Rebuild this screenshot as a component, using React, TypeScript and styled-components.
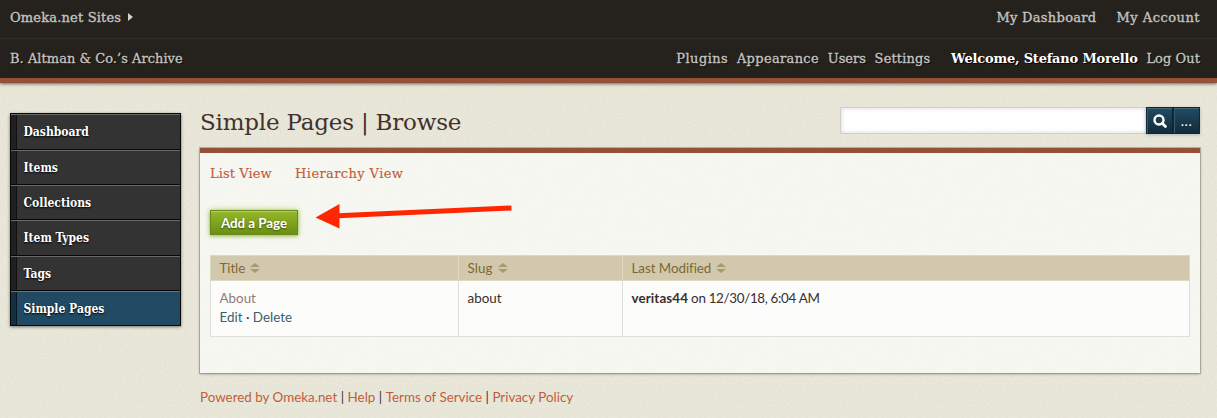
import React from 'react';
import styled, { createGlobalStyle } from 'styled-components';

const slab = '"DejaVu Serif", serif';
const slabNarrow = '"DejaVu Serif Condensed", "DejaVu Serif", serif';
const sans = 'Lato, "Open Sans", sans-serif';

const noise = (frequency: number, alpha: number, rgb: string) =>
  `url("data:image/svg+xml,${encodeURIComponent(
    `<svg xmlns='http://www.w3.org/2000/svg' width='200' height='200'><filter id='n' x='0' y='0' width='100%' height='100%'><feTurbulence type='fractalNoise' baseFrequency='${frequency}' numOctaves='2' stitchTiles='stitch'/><feColorMatrix values='0 0 0 0 ${rgb.split(' ')[0]} 0 0 0 0 ${rgb.split(' ')[1]} 0 0 0 0 ${rgb.split(' ')[2]} ${alpha} 0 0 0 ${-alpha * 0.4}'/></filter><rect width='200' height='200' filter='url(#n)'/></svg>`
  )}")`;

const GlobalStyle = createGlobalStyle`
  * { box-sizing: border-box; }
  body {
    margin: 0;
    overflow: hidden;
    background: #e9e7d9 ${noise(0.45, 1, '0.72 0.71 0.6')};
    font: 13.4px/19px ${sans};
    color: #3a2f30;
  }
  a { color: inherit; text-decoration: none; }
`;

const Page = styled.div`
  height: 418px;
  display: flex;
  flex-direction: column;
`;

const Header = styled.header`
  flex: none;
  background: #25221d;
  border-bottom: 5px solid #955138;
  box-shadow: 0 1px 3px rgba(0, 0, 0, 0.55);
  font-family: ${slab};
  font-size: 13px;
  color: #c4c3c0;
`;

const Bar = styled.div<{ $height: number; $divided?: boolean }>`
  display: flex;
  align-items: center;
  justify-content: space-between;
  height: ${p => p.$height}px;
  padding: 0 17px ${p => (p.$divided ? 4 : 0)}px 10px;
  border-bottom: ${p => (p.$divided ? '1px solid #2d2d2d' : '0')};
  text-shadow: ${p => (p.$divided ? 'none' : '1px 1px 1px #000')};
`;

const Links = styled.nav<{ $gap: number }>`
  display: flex;
  align-items: center;
  gap: ${p => p.$gap}px;
`;

const HeaderLink = styled.a<{ $track?: number }>`
  letter-spacing: ${p => p.$track || 0}px;
  -webkit-text-stroke: 0.35px currentColor;
  white-space: nowrap;
`;

const Welcome = styled(HeaderLink)`
  margin-left: 12px;
  color: #fff;
  font-weight: 700;
  -webkit-text-stroke: 0;
`;

const Caret = styled.span`
  border: solid transparent;
  border-width: 4.5px 0 4.5px 5px;
  border-left-color: #d0cfcc;
`;

const Columns = styled.div`
  display: flex;
  align-items: flex-start;
  padding: 24px 17px 0 10px;
`;

const Sidebar = styled.nav`
  flex: none;
  width: 170.5px;
  margin: 6px 19.5px 0 0;
  border: solid #080808;
  border-width: 1px 1px 0;
  box-shadow: 0 1px 3px rgba(0, 0, 0, 0.5);
`;

const SideLink = styled.a<{ $active?: boolean; $height: number }>`
  display: flex;
  align-items: center;
  height: ${p => p.$height}px;
  padding-left: 6px;
  border-top: 1px solid ${p => (p.$active ? '#5b7683' : '#696a66')};
  border-bottom: 1px solid #080808;
  background:
    linear-gradient(90deg, rgba(0, 0, 0, 0.36) 5px, rgba(0, 0, 0, 0.7) 5px 6px, transparent 6px),
    repeating-conic-gradient(rgba(0, 0, 0, 0.07) 0 25%, transparent 0 50%) 0 0 / 4px 4px,
    ${p => (p.$active ? '#214d67' : '#353535')};
  font: 700 12px/16px ${slabNarrow};
  color: #fff;
  text-shadow: 0 1px 2px #000;
  text-indent: 6.5px;
`;

const Main = styled.main`
  flex: 1;
  min-width: 0;
`;

const TitleRow = styled.div`
  display: flex;
  justify-content: space-between;
  height: 41px;
`;

const Heading = styled.h1`
  margin: 0;
  font: 400 23px/30px ${slab};
  letter-spacing: -0.2px;
  color: #43302f;
`;

const Search = styled.form`
  display: flex;
  width: 360px;
  height: 27px;
`;

const SearchInput = styled.input`
  flex: 1;
  min-width: 0;
  border: 1px solid #cfcfc9;
  border-right: 0;
  background: #fff;
  box-shadow: inset 0 0 5px rgba(0, 0, 0, 0.16);
`;

const SearchButton = styled.button`
  display: flex;
  align-items: center;
  justify-content: center;
  width: 27px;
  padding: 0;
  border: 1px solid #0e2838;
  background: linear-gradient(#214c65, #122b3a);
  box-shadow: inset 0 1px 0 #416679, inset 1px 0 0 #395969, 0 1px 3px rgba(0, 0, 60, 0.22);
  font: 14px/18px ${sans};
  letter-spacing: 0.6px;
  color: #fff;
`;

const Panel = styled.section`
  height: 225px;
  padding: 12px 10px 0;
  border-top: 5px solid #955138;
  background: #f6f7f1 ${noise(0.09, 0.22, '0.82 0.83 0.77')};
  box-shadow: 0 0 0 1px rgba(80, 80, 70, 0.3), 0 1px 3px rgba(0, 0, 0, 0.3);
`;

const Tabs = styled.nav`
  display: flex;
  gap: 23.5px;
  font: 13px/18px ${slab};
  color: #c25d3a;
`;

const Tab = styled.a<{ $track?: number }>`
  letter-spacing: ${p => p.$track || 0}px;
  -webkit-text-stroke: 0.15px currentColor;
`;

const AddRow = styled.div`
  position: relative;
  margin-top: 27px;
`;

const AddButton = styled.a`
  display: flex;
  align-items: center;
  justify-content: center;
  width: 88px;
  height: 25px;
  padding-top: 1px;
  border: 1px solid #668819;
  background: linear-gradient(#95b82b, #6d8f14);
  box-shadow: inset 0 1px 0 #b4cd66, 0 0 6px #b5cf6a, 0 1px 3px rgba(80, 110, 0, 0.5);
  font-weight: 700;
  letter-spacing: -0.05px;
  color: #fff;
  text-shadow: 0 1px 2px rgba(30, 50, 0, 0.7);
`;

const Arrow = styled.svg`
  position: absolute;
  left: 100px;
  top: -10px;
`;

const Table = styled.table`
  width: 980px;
  margin-top: 20px;
  border-collapse: collapse;
  table-layout: fixed;
`;

const HeadCell = styled.th<{ $width?: number }>`
  width: ${p => (p.$width ? `${p.$width}px` : 'auto')};
  height: 25px;
  padding: 0 9px 0 8.5px;
  border: 1px solid #ded7c1;
  background: #d2c8ad;
  font-weight: 400;
  text-align: left;
  color: #7d6830;
`;

const HeadLabel = styled.a<{ $track?: number }>`
  display: flex;
  align-items: center;
  gap: 5px;
  letter-spacing: ${p => p.$track || 0}px;
`;

const Cell = styled.td`
  height: 56px;
  padding: 8px 9px 0 8.5px;
  border: 1px solid #dedfd7;
  background: rgba(255, 255, 255, 0.68);
  vertical-align: top;
`;

const Unpublished = styled.a`
  display: block;
  color: #95797a;
`;

const Action = styled.a`
  color: #38606f;
`;

const Modified = styled.span`
  letter-spacing: -0.32px;
`;

const User = styled.strong`
  letter-spacing: 0.1px;
`;

const Footer = styled.footer`
  display: flex;
  gap: 3.5px;
  margin-top: 15px;
`;

const FooterLink = styled.a`
  color: #c25d3a;
`;

function SortMark() {
  return (
    <svg width="10" height="10" viewBox="0 0 10 10" fill="#a89b71">
      <path d="M0 4L5 0l5 4zM0 6h10L5 10z" />
    </svg>
  );
}

const sections: [string, number][] = [
  ['Dashboard', 36],
  ['Items', 35],
  ['Collections', 35],
  ['Item Types', 36],
  ['Tags', 35],
  ['Simple Pages', 35],
];

export default function App() {
  return (
    <Page>
      <GlobalStyle />
      <Header>
        <Bar $height={39} $divided>
          <Links $gap={7}>
            <HeaderLink $track={0.18}>Omeka.net Sites</HeaderLink>
            <Caret />
          </Links>
          <Links $gap={20}>
            <HeaderLink $track={0.3}>My Dashboard</HeaderLink>
            <HeaderLink $track={0.5}>My Account</HeaderLink>
          </Links>
        </Bar>
        <Bar $height={39}>
          <HeaderLink $track={0.03}>B. Altman &amp; Co.’s Archive</HeaderLink>
          <Links $gap={8.7}>
            <HeaderLink $track={0.45}>Plugins</HeaderLink>
            <HeaderLink $track={0.33}>Appearance</HeaderLink>
            <HeaderLink>Users</HeaderLink>
            <HeaderLink $track={0.15}>Settings</HeaderLink>
            <Welcome $track={-0.2}>Welcome, Stefano Morello</Welcome>
            <HeaderLink $track={0.06}>Log Out</HeaderLink>
          </Links>
        </Bar>
      </Header>
      <Columns>
        <Sidebar>
          {sections.map(([name, height]) => (
            <SideLink key={name} $height={height} $active={name === 'Simple Pages'}>
              {name}
            </SideLink>
          ))}
        </Sidebar>
        <Main>
          <TitleRow>
            <Heading>Simple Pages | Browse</Heading>
            <Search>
              <SearchInput aria-label="Search" />
              <SearchButton type="button" aria-label="Submit search">
                <svg width="14" height="14" viewBox="0 0 14 14" fill="none" stroke="#fff">
                  <circle cx="6" cy="6" r="4.5" strokeWidth="2.4" />
                  <path d="M9.2 9.2l3.2 3.2" strokeWidth="2.8" strokeLinecap="round" />
                </svg>
              </SearchButton>
              <SearchButton type="button">...</SearchButton>
            </Search>
          </TitleRow>
          <Panel>
            <Tabs>
              <Tab $track={0.07}>List View</Tab>
              <Tab $track={0.4}>Hierarchy View</Tab>
            </Tabs>
            <AddRow>
              <AddButton>Add a Page</AddButton>
              <Arrow width="206" height="34" viewBox="0 0 206 34">
                <path d="M28 15.8L201.5 8" stroke="#ff2600" strokeWidth="5" />
                <path d="M5.5 17.5L29.5 4v24.5z" fill="#ff2600" />
              </Arrow>
            </AddRow>
            <Table>
              <thead>
                <tr>
                  <HeadCell $width={248}><HeadLabel $track={-0.1}>Title<SortMark /></HeadLabel></HeadCell>
                  <HeadCell $width={164}><HeadLabel $track={0.1}>Slug<SortMark /></HeadLabel></HeadCell>
                  <HeadCell><HeadLabel $track={-0.06}>Last Modified<SortMark /></HeadLabel></HeadCell>
                </tr>
              </thead>
              <tbody>
                <tr>
                  <Cell>
                    <Unpublished>About</Unpublished>
                    <Action>Edit</Action> · <Action>Delete</Action>
                  </Cell>
                  <Cell>about</Cell>
                  <Cell><User>veritas44</User><Modified> on 12/30/18, 6:04 AM</Modified></Cell>
                </tr>
              </tbody>
            </Table>
          </Panel>
          <Footer>
            <FooterLink>Powered by Omeka.net</FooterLink>|
            <FooterLink>Help</FooterLink>|
            <FooterLink>Terms of Service</FooterLink>|
            <FooterLink>Privacy Policy</FooterLink>
          </Footer>
        </Main>
      </Columns>
    </Page>
  );
}
